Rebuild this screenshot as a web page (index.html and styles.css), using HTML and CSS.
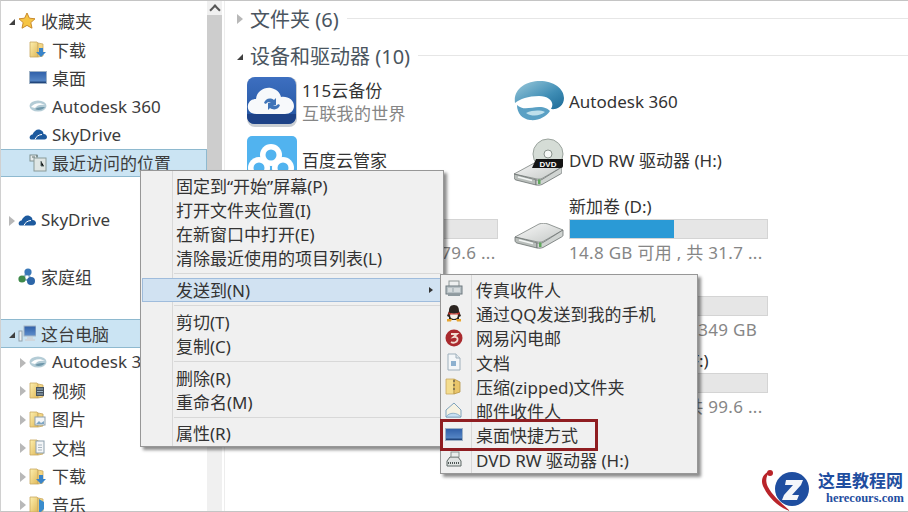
FILE: index.html
```html
<!DOCTYPE html>
<html lang="zh-CN">
<head>
    <meta charset="UTF-8">
    <title>这台电脑</title>
    <link rel="stylesheet" href="styles.css">
</head>
<body>
    <svg class="sprite" xmlns="http://www.w3.org/2000/svg">
        <defs>
            <linearGradient id="g-folder" x1="0" y1="0" x2="1" y2="1"><stop offset="0" stop-color="#fdf0b0"/><stop offset="1" stop-color="#e0b858"/></linearGradient>
            <linearGradient id="g-screen" x1="0" y1="0" x2="0" y2="1"><stop offset="0" stop-color="#2f5fa8"/><stop offset="1" stop-color="#5f8fcc"/></linearGradient>
            <linearGradient id="g-115" x1="0" y1="0" x2="0" y2="1"><stop offset="0" stop-color="#3d6fc0"/><stop offset="1" stop-color="#23549f"/></linearGradient>
            <linearGradient id="g-swirl" x1="0" y1="0" x2="1" y2="1"><stop offset="0" stop-color="#9ccadb"/><stop offset=".6" stop-color="#3f8db5"/><stop offset="1" stop-color="#1c6a96"/></linearGradient>
            <linearGradient id="g-drive" x1="0" y1="0" x2="1" y2="1"><stop offset="0" stop-color="#fafafa"/><stop offset="1" stop-color="#c4c8c6"/></linearGradient>
        </defs>
        <symbol id="i-star" viewBox="0 0 18 18"><path d="M9 1l2.400 5.200 5.600.6-4.200 3.800 1.200 5.600L9 13.400 4 16.200l1.200-5.600L1 6.800l5.600-.6z" fill="#f6c544" stroke="#c98a2c"/></symbol>
        <symbol id="i-folder" viewBox="0 0 18 18"><path d="M1 2h7l1 1v14H1z" fill="url(#g-folder)" stroke="#c9a861" stroke-width=".8"/><path d="M9 3l5 1v12l-5 1z" fill="#f3d582" stroke="#c9a861" stroke-width=".8"/></symbol>
        <symbol id="i-down" viewBox="0 0 18 18"><use href="#i-folder"/><path d="M10 8h4v4h3l-5 5-5-5h3z" fill="#3a84c8"/></symbol>
        <symbol id="i-video" viewBox="0 0 18 18"><use href="#i-folder"/><rect x="7" y="6" width="8" height="9" fill="#46525e"/><path d="M8 8h6M8 10.500h6M8 13h6" stroke="#9fb6c6"/></symbol>
        <symbol id="i-pic" viewBox="0 0 18 18"><use href="#i-folder"/><rect x="6" y="7" width="10" height="8" fill="#f4f6f8" stroke="#8da0ad"/><path d="M7 14l3-3 2 2 3-2v3z" fill="#7fa6c4"/></symbol>
        <symbol id="i-doc" viewBox="0 0 18 18"><use href="#i-folder"/><rect x="7" y="3" width="8" height="12" fill="#f4f6f8" stroke="#8da0ad"/><path d="M9 7h4M9 9.500h4M9 12h4" stroke="#a9b6c0"/></symbol>
        <symbol id="i-music" viewBox="0 0 18 18"><use href="#i-folder"/><path d="M10 4l5 3v7l-3 3h-2z" fill="#3a8ccc"/></symbol>
        <symbol id="i-desk" viewBox="0 0 18 14"><rect x=".5" y=".5" width="17" height="12" fill="url(#g-screen)" stroke="#9fb2c6"/><path d="M1 10.500h16V12H1z" fill="#22467c"/></symbol>
        <symbol id="i-eye" viewBox="0 0 18 14"><ellipse cx="9" cy="7" rx="8.500" ry="5.500" fill="#b4ccd6"/><path d="M2 8c3-4 9-5 14-2-4-1-8 0-10 3z" fill="#fff"/><path d="M6 10c3-2 7-2 10-2-2 3-7 4-10 2z" fill="#6f97aa"/></symbol>
        <symbol id="i-cloud" viewBox="0 0 18 12"><path d="M2 11.500C0 11 0 7 3.500 6.500 5 3 8 .8 11 1.800c2 .6 3.500 2.200 3.500 4.200 2-.2 3.500 1.500 3.500 3 0 1.500-1 2.500-2.500 2.500z" fill="#1d5a9e"/><path d="M6 11.500C7 8.500 10 6.500 13 6.500" stroke="#fff" fill="none"/></symbol>
        <symbol id="i-recent" viewBox="0 0 18 18"><rect x="1" y="1" width="7" height="6" fill="#e7ecec" stroke="#7f8f8f"/><rect x="5" y="4" width="12" height="13" fill="#dfe6e4" stroke="#8a9a98"/><path d="M7 2h2M12 7v5h3M3 3h3" stroke="#5d6e6c"/></symbol>
        <symbol id="i-home" viewBox="0 0 18 18"><path d="M10 4L4 11l9 2z" fill="none" stroke="#8fb0c8" stroke-width="2"/><circle cx="10" cy="4" r="3.600" fill="#3a78b8"/><circle cx="4" cy="11" r="3.600" fill="#3f8a4a"/><circle cx="13" cy="13" r="4" fill="#2d66a8"/></symbol>
        <symbol id="i-pc" viewBox="0 0 18 18"><rect x="6" y="1" width="12" height="10" fill="url(#g-screen)" stroke="#a8b6c4"/><path d="M9 12h6v2H9zM7 14h10v2H7z" fill="#cfd6dc"/><rect x="1" y="6" width="3" height="10" fill="#eef1f3" stroke="#8fa0ad"/></symbol>
        <symbol id="i-fax" viewBox="0 0 18 18"><rect x="4" y="1" width="10" height="6" fill="#eef0f0" stroke="#8f9797"/><rect x="1" y="6" width="16" height="8" fill="#b7c0c4" stroke="#6f7a80"/><path d="M3 9h4M3 11h4M9 9h6M9 11h6" stroke="#f4f6f6"/><rect x="3" y="14" width="12" height="2" fill="#8f9a9f"/></symbol>
        <symbol id="i-qq" viewBox="0 0 18 18"><path d="M9 1c4 0 5 3 5 6l2 5-2 1c0 2 1 3-5 3s-5-1-5-3l-2-1 2-5c0-3 1-6 5-6z" fill="#2b2420"/><path d="M5.500 9c2 1 5 1 7 0 1 3 0 6-3.500 6s-4.500-3-3.500-6z" fill="#f6f2ea"/><path d="M3.500 8c3 2 8 2 11 0v2.500H3.500z" fill="#c9332a"/><path d="M2 15h5l-1 2.500H2zM11 15h5v2.500h-4z" fill="#e8a52e"/></symbol>
        <symbol id="i-mail163" viewBox="0 0 18 18"><circle cx="9" cy="9" r="8.500" fill="#a92a2e"/><path d="M6 5h6L8.500 8c3-.5 4.500 1 4 3-.5 2.500-4 3.500-6.500 2" fill="none" stroke="#f2dcd0" stroke-width="1.800"/></symbol>
        <symbol id="i-page" viewBox="0 0 18 18"><path d="M3 1h8l4 4v12H3z" fill="#f3f6f8" stroke="#9fb0bc"/><path d="M11 1v4h4" fill="#dfe7ec" stroke="#9fb0bc"/><rect x="6" y="8" width="5" height="5" fill="#8cb0cf"/></symbol>
        <symbol id="i-zip" viewBox="0 0 18 18"><path d="M1 2h8v15H1z" fill="#f4dd8f" stroke="#c9a861" stroke-width=".8"/><path d="M9 2l6 3v10l-6 2z" fill="#e9c56a" stroke="#b59445" stroke-width=".8"/><path d="M8 3h2v2H8zM8 7h2v2H8zM8 11h2v2H8z" fill="#8a7a52"/></symbol>
        <symbol id="i-envelope" viewBox="0 0 18 18"><path d="M1 9l8-7 7 7v7H1z" fill="#f6f2e2" stroke="#7fa3bd"/><path d="M1 16c3-5 11-5 15 0z" fill="#c8e0f2" stroke="#7fa3bd" stroke-width=".8"/></symbol>
        <symbol id="i-dvdsmall" viewBox="0 0 18 18"><path d="M2 11l3-4h8l3 4v5H2z" fill="#dfe3e2" stroke="#5f6866"/><rect x="6" y="2" width="8" height="5" fill="#e9edec" stroke="#8a9390"/><path d="M3 13h12" stroke="#4d5553" stroke-dasharray="1 1" stroke-width="2"/></symbol>
        <symbol id="i-drive" viewBox="0 0 48 26">
            <path d="M0 14L24 1c3-1 6-1 9 0l15 6-20 11.500c-2 .8-4 .8-6 .3z" fill="url(#g-drive)" stroke="#7a807e" stroke-width=".8"/>
            <path d="M0 14l22 5.800V25L2 20c-1.500-.5-2-1.500-2-3z" fill="#b9bebb" stroke="#6a706e" stroke-width=".8"/>
            <path d="M22 19.800c2 .5 4 .5 6-.3L48 7v5c0 1-.5 1.500-1.500 2L28 24.500c-2 .8-4 .8-6 .5z" fill="#d0d4d2" stroke="#6a706e" stroke-width=".8"/>
            <path d="M4 17l14 3.500" stroke="#f4f6f5" stroke-width="1.500"/>
            <rect x="24" y="19.500" width="2.500" height="4.500" fill="#5fa85c"/>
        </symbol>
    </svg>

    <div class="window">
        <nav class="nav">
            <div class="row"><span class="tri tri-open"></span><svg class="ic"><use href="#i-star"/></svg>收藏夹</div>
            <div class="row sub"><svg class="ic"><use href="#i-down"/></svg>下载</div>
            <div class="row sub"><svg class="ic"><use href="#i-desk"/></svg>桌面</div>
            <div class="row sub"><svg class="ic"><use href="#i-eye"/></svg>Autodesk 360</div>
            <div class="row sub"><svg class="ic"><use href="#i-cloud"/></svg>SkyDrive</div>
            <div class="row sub selected"><svg class="ic"><use href="#i-recent"/></svg>最近访问的位置</div>

            <div class="row group"><span class="tri tri-closed"></span><svg class="ic"><use href="#i-cloud"/></svg>SkyDrive</div>
            <div class="row group"><svg class="ic"><use href="#i-home"/></svg>家庭组</div>

            <div class="row group selected"><span class="tri tri-open"></span><svg class="ic"><use href="#i-pc"/></svg>这台电脑</div>
            <div class="row sub"><span class="tri tri-closed"></span><svg class="ic"><use href="#i-eye"/></svg>Autodesk 360</div>
            <div class="row sub"><span class="tri tri-closed"></span><svg class="ic"><use href="#i-video"/></svg>视频</div>
            <div class="row sub"><span class="tri tri-closed"></span><svg class="ic"><use href="#i-pic"/></svg>图片</div>
            <div class="row sub"><span class="tri tri-closed"></span><svg class="ic"><use href="#i-doc"/></svg>文档</div>
            <div class="row sub"><span class="tri tri-closed"></span><svg class="ic"><use href="#i-down"/></svg>下载</div>
            <div class="row sub"><span class="tri tri-closed"></span><svg class="ic"><use href="#i-music"/></svg>音乐</div>
        </nav>

        <div class="scrollbar">
            <div class="scroll-up"></div>
            <div class="scroll-thumb"></div>
        </div>

        <main class="content">
            <h2 class="heading"><span class="tri tri-closed"></span>文件夹 (6)<span class="rule"></span></h2>
            <h2 class="heading"><span class="tri tri-open"></span>设备和驱动器 (10)<span class="rule"></span></h2>

            <div class="devices">
                <div class="col">
                    <div class="dev">
                        <svg class="big" viewBox="0 0 50 50">
                            <rect x="0" y="0" width="50" height="50" rx="8" fill="#c9ced3"/>
                            <rect x="0" y="0" width="49" height="47" rx="8" fill="url(#g-115)"/>
                            <path d="M0 37h49v2c0 5-3 8-8 8H8c-5 0-8-3-8-8z" fill="#1d4287"/>
                            <path d="M9 37c-6 0-9-4-8-9 1-4 4-6 8-6 1-8 8-12 15-11 5 1 9 4 10 9 7-1 13 3 13 9 0 5-4 8-9 8z" fill="#f7f9fb"/>
                            <path d="M17 26c1-4 6-6 10-3l2-2v7h-7l2-2c-2-1-4-1-5 1zM33 28c-1 4-6 6-10 3l-2 2v-7h7l-2 2c2 1 4 1 5-1z" fill="#3f74b8"/>
                        </svg>
                        <div>
                            <div class="name">115云备份</div>
                            <div class="note">互联我的世界</div>
                        </div>
                    </div>
                    <div class="dev">
                        <svg class="big" viewBox="0 0 50 50">
                            <rect width="50" height="50" rx="5" fill="#51b3ef"/>
                            <circle cx="24" cy="19" r="11" fill="#fff"/>
                            <circle cx="12" cy="32" r="11" fill="#fff"/>
                            <circle cx="36" cy="32" r="11" fill="#fff"/>
                            <circle cx="24" cy="19" r="5.500" fill="#51b3ef"/>
                            <circle cx="12" cy="32" r="5.500" fill="#51b3ef"/>
                            <circle cx="36" cy="32" r="5.500" fill="#51b3ef"/>
                        </svg>
                        <div class="name">百度云管家</div>
                    </div>
                    <div class="drive">
                        <svg class="big hd"><use href="#i-drive"/></svg>
                        <div class="drive-info short">
                            <div class="name">本地磁盘 (C:)</div>
                            <div class="bar"></div>
                            <div class="note">10.8 GB 可用 , 共 79.6 ...</div>
                        </div>
                    </div>
                </div>
                <div class="col">
                    <div class="dev">
                        <svg class="big" viewBox="0 0 50 50">
                            <path d="M1 26C-1 12 12 4 26 4c13 0 24 7 24 17 0 8-7 12-13 11 4-6-1-13-12-13C14 19 6 22 1 26z" fill="url(#g-swirl)"/>
                            <path d="M3 28c6 6 14 2 22 2 6 0 9 2 11 4-4 6-12 10-20 9C8 42 3 36 3 28z" fill="#5aa0c4"/>
                            <path d="M12 36c7-3 14-3 19-1-5 4-13 5-19 1z" fill="#bfe0ec"/>
                        </svg>
                        <div class="name">Autodesk 360</div>
                    </div>
                    <div class="dev">
                        <svg class="big" viewBox="0 0 50 50">
                            <circle cx="34" cy="18" r="15" fill="#d5dcd6" stroke="#9aa39d"/>
                            <circle cx="34" cy="18" r="4" fill="#f6f8f6" stroke="#8a938d"/>
                            <g transform="translate(0 24)"><use href="#i-drive" width="48" height="26"/></g>
                            <path d="M22 23h27v7c0 1-1 2-2 2H18z" fill="#151515"/>
                            <text class="dvd-label" x="34" y="30.500" text-anchor="middle">DVD</text>
                        </svg>
                        <div class="name">DVD RW 驱动器 (H:)</div>
                    </div>
                    <div class="drive">
                        <svg class="big hd"><use href="#i-drive"/></svg>
                        <div class="drive-info">
                            <div class="name">新加卷 (D:)</div>
                            <div class="bar"><div class="fill"></div></div>
                            <div class="note">14.8 GB 可用 , 共 31.7 ...</div>
                        </div>
                    </div>
                    <div class="drive">
                        <svg class="big hd"><use href="#i-drive"/></svg>
                        <div class="drive-info">
                            <div class="name">新加卷 (E:)</div>
                            <div class="bar"></div>
                            <div class="note">2.5 GB 可用 , 共 349 GB</div>
                        </div>
                    </div>
                    <div class="drive">
                        <svg class="big hd"><use href="#i-drive"/></svg>
                        <div class="drive-info">
                            <div class="name">软件文档备份2 (F:)</div>
                            <div class="bar"></div>
                            <div class="note">52.1 GB 可用 , 共 99.6 ...</div>
                        </div>
                    </div>
                </div>
            </div>
        </main>
    </div>

    <!-- context menu -->
    <div class="menu main-menu">
        <div class="item">固定到“开始”屏幕(P)</div>
        <div class="item">打开文件夹位置(I)</div>
        <div class="item">在新窗口中打开(E)</div>
        <div class="item">清除最近使用的项目列表(L)</div>
        <div class="sep sep-low"></div>
        <div class="item hot">发送到(N)<span class="more"></span></div>
        <div class="sep sep-low"></div>
        <div class="item">剪切(T)</div>
        <div class="item">复制(C)</div>
        <div class="sep sep-low"></div>
        <div class="item">删除(R)</div>
        <div class="item">重命名(M)</div>
        <div class="sep"></div>
        <div class="item">属性(R)</div>
    </div>

    <div class="menu send-menu">
        <div class="item"><svg class="mi"><use href="#i-fax"/></svg>传真收件人</div>
        <div class="item"><svg class="mi"><use href="#i-qq"/></svg>通过QQ发送到我的手机</div>
        <div class="item"><svg class="mi"><use href="#i-mail163"/></svg>网易闪电邮</div>
        <div class="item"><svg class="mi"><use href="#i-page"/></svg>文档</div>
        <div class="item"><svg class="mi"><use href="#i-zip"/></svg>压缩(zipped)文件夹</div>
        <div class="item"><svg class="mi"><use href="#i-envelope"/></svg>邮件收件人</div>
        <div class="item boxed"><svg class="mi"><use href="#i-desk"/></svg>桌面快捷方式</div>
        <div class="item"><svg class="mi"><use href="#i-dvdsmall"/></svg>DVD RW 驱动器 (H:)</div>
    </div>

    <!-- watermark -->
    <div class="logo">
        <svg class="logo-mark" viewBox="0 0 52 44">
            <circle cx="32" cy="22" r="17" fill="#1f4ea0"/>
            <path d="M10 4C2 7 0 14 4 21c5 10 14 19 26 23-9-8-18-16-22-24-3-6-2-11 2-16z" fill="#b9242a"/>
            <circle cx="10" cy="6" r="3" fill="#b9242a"/>
            <path d="M26 13h17l-2 5-9 10h7l-2 5H22l2-5 9-10h-8z" fill="#f4f6fa"/>
        </svg>
        <div class="logo-text">
            <div class="logo-cn">这里教程网</div>
            <div class="logo-en">herecours.com</div>
        </div>
    </div>
</body>
</html>
```

FILE: styles.css
```css
* {
    box-sizing: border-box;
}
html, body {
    margin: 0;
    height: 100%;
}
body {
    width: 908px;
    height: 512px;
    overflow: hidden;
    position: relative;
    background-color: #fff;
    color: #3c3c3c;
    font-family: "Noto Sans", "Noto Sans CJK SC", sans-serif;
    font-size: 17px;
}
.sprite {
    display: block;
    width: 0;
    height: 0;
}
.window {
    display: flex;
    height: 512px;
    border-top: 1px solid #c4c4c4;
    border-bottom: 1px solid #c4c4c4;
    border-left: 1px solid #d0d0d0;
}

/* left tree */
.nav {
    width: 206px;
    padding-top: 5.5px;
    flex: none;
}
.row {
    display: flex;
    align-items: center;
    height: 28.45px;
    padding-left: 17px;
    position: relative;
    white-space: nowrap;
}
.row.sub {
    padding-left: 28px;
}
.row.group {
    margin-top: 28.45px;
}
.selected {
    background-color: #cbe4f3;
    border: 1px solid #8eb9cf;
    border-left: 0;
}
.ic {
    width: 18px;
    height: 18px;
    margin-right: 5px;
    flex: none;
}
.tri {
    width: 0;
    height: 0;
}
.row .tri {
    position: absolute;
    top: 10px;
}
.row .tri-open {
    left: 8px;
    top: 12px;
}
.row .tri-closed {
    left: 8px;
}
.row.sub .tri-closed {
    left: 19px;
}
.tri-closed {
    border-top: 5px solid transparent;
    border-bottom: 5px solid transparent;
    border-left: 6px solid #b8b8b8;
}
.tri-open {
    border-left: 6px solid transparent;
    border-bottom: 6px solid #404040;
}

/* scrollbar */
.scrollbar {
    width: 15px;
    flex: none;
    background-color: #f0f0f0;
}
.scroll-up {
    height: 14px;
    position: relative;
}
.scroll-up::before {
    content: "";
    position: absolute;
    left: 4px;
    top: 5px;
    width: 6px;
    height: 6px;
    border-top: 2px solid #555;
    border-left: 2px solid #555;
    transform: rotate(45deg);
}
.scroll-thumb {
    height: 230px;
    background-color: #cdcdcd;
}

/* right pane */
.content {
    flex: 1;
    border-left: 1px solid #ededed;
    margin-left: 2px;
    padding: 0 0 0 11px;
}
.heading {
    display: flex;
    align-items: center;
    height: 37px;
    margin: 0;
    padding: 0 0 3px 14px;
    font-size: 20px;
    font-weight: 400;
    color: #4a5560;
    position: relative;
}
.heading .tri {
    position: absolute;
    left: 1px;
    top: 13px;
}
.heading .tri-open {
    top: 16px;
}
.rule {
    flex: 1;
    height: 1px;
    margin: 0 0 0 8px;
    background-color: #e6e6e6;
}
.devices {
    display: flex;
    margin-top: -3px;
}
.col {
    width: 267px;
    flex: none;
}
.dev {
    display: flex;
    align-items: center;
    height: 59px;
    padding-left: 11px;
}
.drive {
    display: flex;
    align-items: flex-start;
    height: 77px;
    padding: 6px 0 0 11px;
}
.big {
    width: 50px;
    height: 50px;
    margin-right: 5px;
    flex: none;
}
.hd {
    height: 26px;
    margin-top: 27px;
}
.name {
    line-height: 23px;
    color: #333;
    white-space: nowrap;
}
.note {
    line-height: 23px;
    color: #868686;
    letter-spacing: 0.3px;
    white-space: nowrap;
}
.drive-info {
    width: 199px;
}
.drive-info.short {
    width: 196px;
}
.drive-info .name {
    line-height: 22px;
}
.bar {
    height: 20px;
    margin: 1px 0 2px;
    background-color: #e6e6e6;
    border: 1px solid #d4d4d4;
}
.fill {
    height: 100%;
    width: 53%;
    background-color: #2a9ad6;
}
.dvd-label {
    font-family: "Liberation Sans", sans-serif;
    font-size: 8px;
    font-weight: 700;
    fill: #fff;
}

/* context menus */
.menu {
    position: absolute;
    background-color: #f0f0f0;
    border: 1px solid #979797;
    box-shadow: 3px 3px 3px rgba(0, 0, 0, 0.45);
    font-size: 17px;
    color: #333;
    white-space: nowrap;
}
.main-menu {
    left: 140px;
    top: 170px;
    width: 304px;
    height: 277px;
    padding: 2.5px 2px 0 1px;
    background-image: linear-gradient(#d8d8d8, #d8d8d8);
    background-repeat: no-repeat;
    background-size: 1px 100%;
    background-position: 31px 0;
}
.send-menu {
    left: 440px;
    top: 274px;
    width: 258px;
    height: 200px;
    padding: 2px 2px 0 1px;
    background-image: linear-gradient(#d8d8d8, #d8d8d8);
    background-repeat: no-repeat;
    background-size: 1px 100%;
    background-position: 30px 0;
}
.item {
    display: flex;
    align-items: center;
    height: 24px;
    padding-left: 34px;
    position: relative;
}
.send-menu .item {
    height: 24.3px;
}
.hot {
    background-color: #d1e2f2;
    border: 1px solid #9fbcdc;
    padding-left: 33px;
}
.more {
    position: absolute;
    right: 7px;
    top: 8px;
    border-top: 3.5px solid transparent;
    border-bottom: 3.5px solid transparent;
    border-left: 4px solid #333;
}
.sep {
    height: 1px;
    margin: 3px 0 3px 32px;
    background-color: #d8d8d8;
}
.sep-low {
    margin-bottom: 4px;
}
.mi {
    width: 18px;
    height: 18px;
    position: absolute;
    left: 3px;
    top: 3px;
}
.boxed::after {
    content: "";
    box-sizing: border-box;
    position: absolute;
    left: -2px;
    top: -4px;
    bottom: -4px;
    width: 158px;
    border: 3px solid #8f1d21;
}

/* logo */
.logo {
    position: absolute;
    right: 0;
    bottom: 1px;
    width: 148px;
    height: 41px;
    display: flex;
    background-color: #fff;
}
.logo-mark {
    width: 52px;
    height: 44px;
    margin-top: -3px;
    flex: none;
}
.logo-text {
    margin-left: 6px;
    color: #1f4ea0;
    font-weight: 700;
}
.logo-cn {
    font-family: "Noto Sans CJK SC", sans-serif;
    font-size: 17px;
    line-height: 19px;
    white-space: nowrap;
}
.logo-en {
    font-family: "Liberation Serif", serif;
    font-size: 12.5px;
    line-height: 14px;
    margin-left: 8px;
    margin-top: 2px;
}
```
